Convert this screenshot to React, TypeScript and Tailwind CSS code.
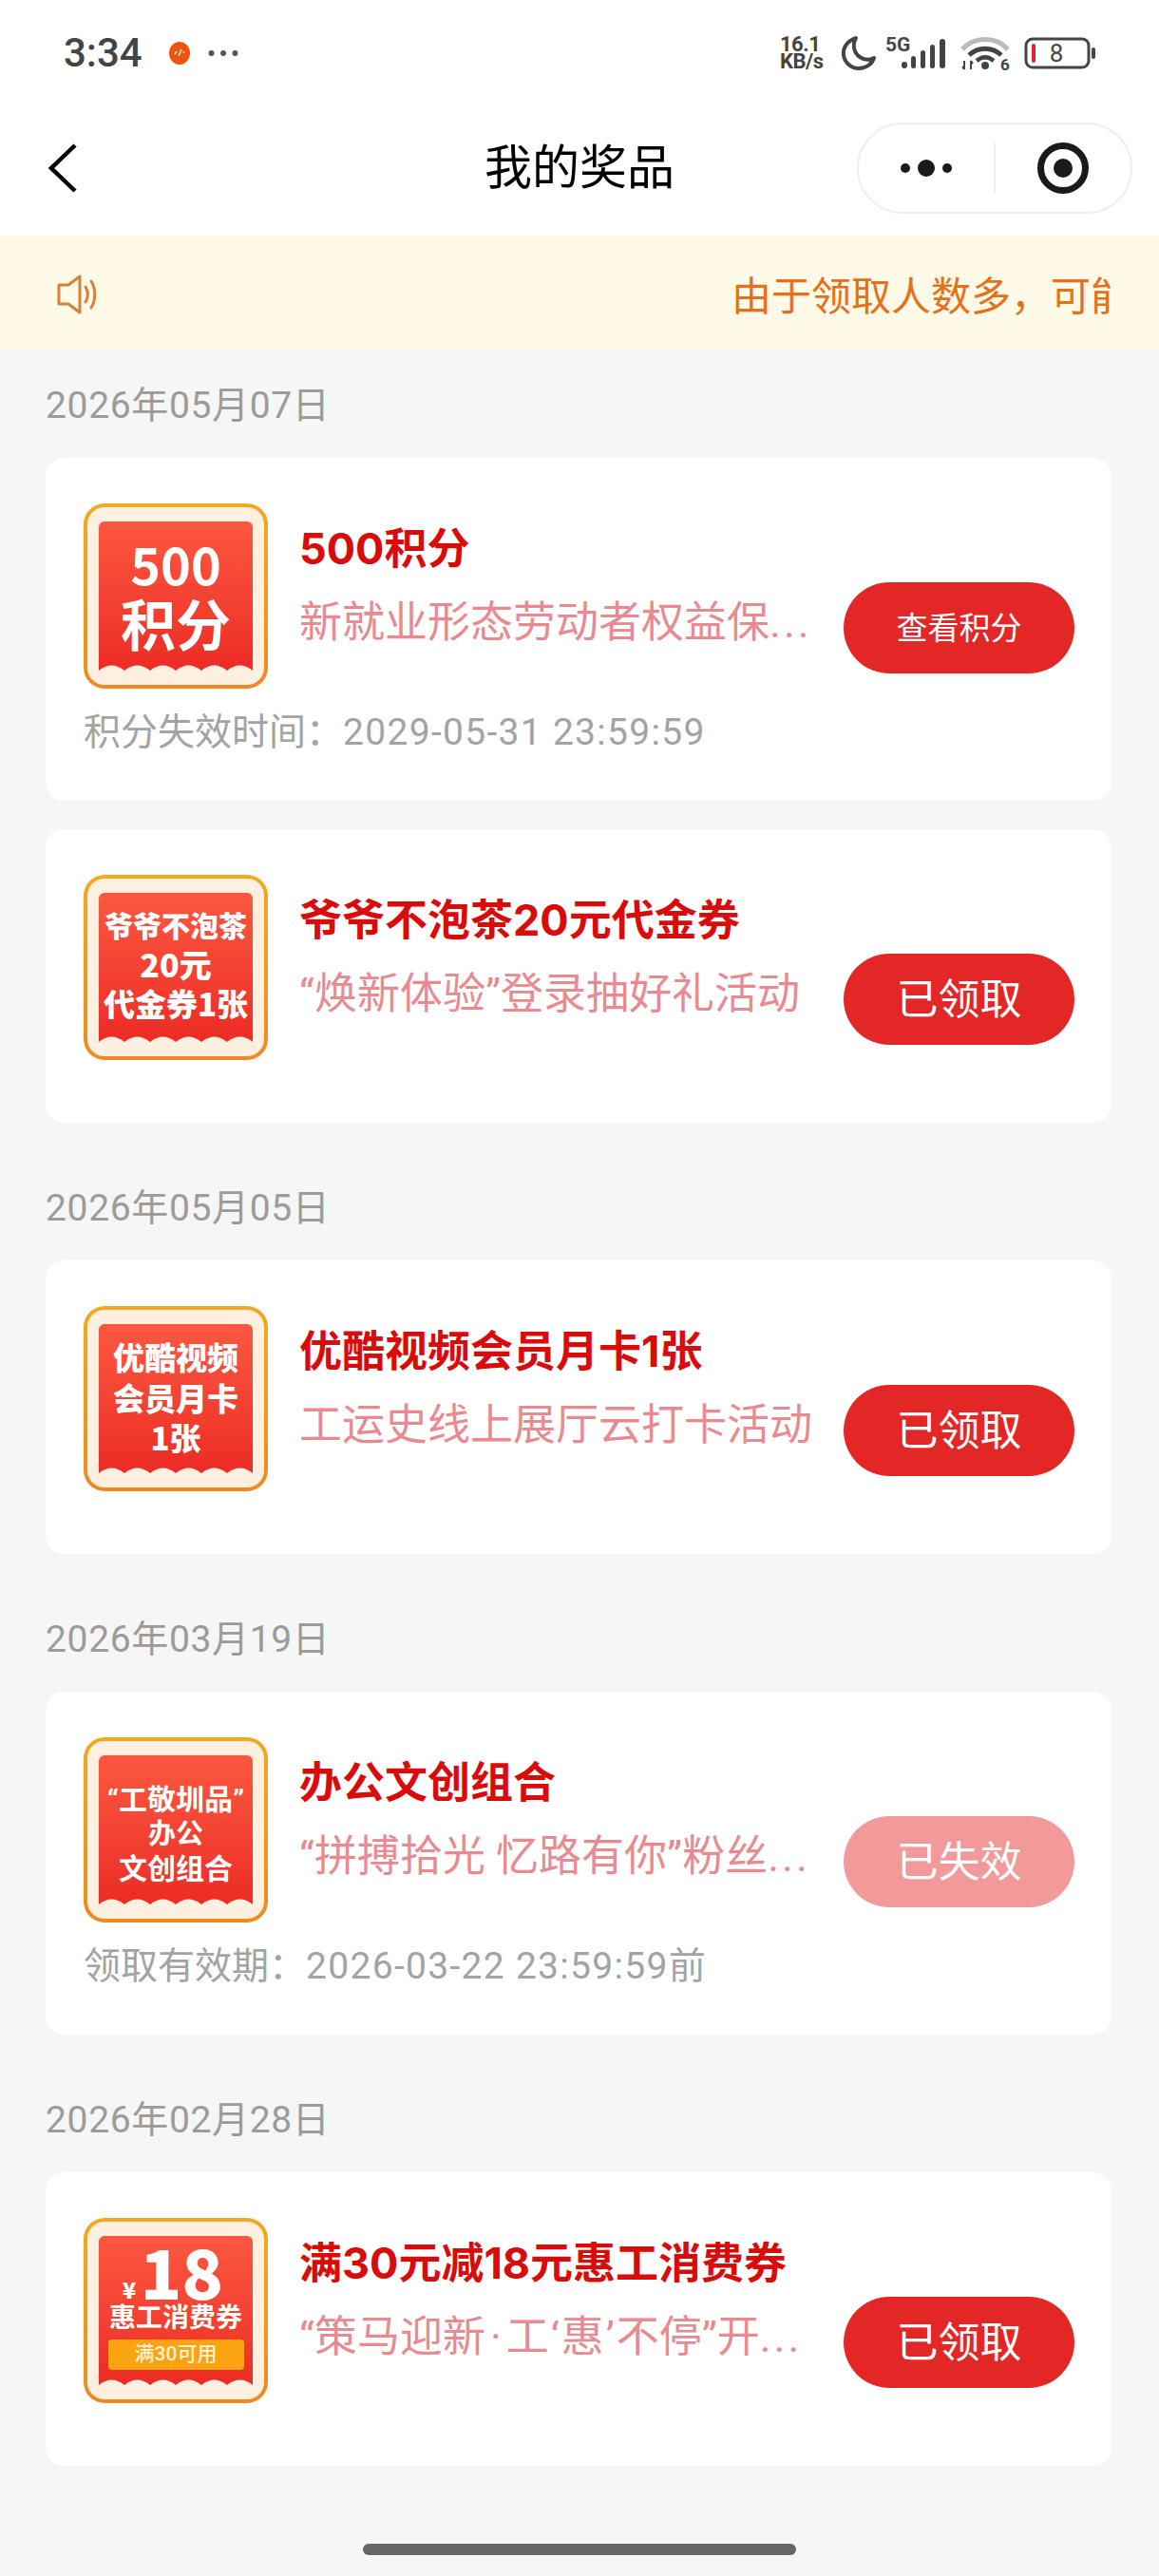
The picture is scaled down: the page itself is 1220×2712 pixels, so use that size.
import type { ReactNode } from "react";

type Line = { text: string; size: number; lead: number; font?: string };

type Prize = {
  id: string;
  thumb: Line[] | "coupon";
  thumbPad?: string;
  title: string;
  sub: ReactNode;
  action: string;
  small?: boolean;
  faded?: boolean;
  note?: [string, string];
};

const notoBold = "font-bold font-['Noto_Sans_CJK_SC',sans-serif]";
const notoBlack = "font-black font-['Noto_Sans_CJK_SC',sans-serif]";
const dots = <span className="tracking-[3px]">...</span>;

const groups: { date: string; prizes: Prize[] }[] = [
  {
    date: "2026年05月07日",
    prizes: [
      {
        id: "points",
        thumb: [
          { text: "500", size: 54, lead: 60, font: notoBold },
          { text: "积分", size: 58, lead: 64, font: notoBold },
        ],
        title: "500积分",
        sub: <>新就业形态劳动者权益保{dots}</>,
        action: "查看积分",
        small: true,
        note: ["积分失效时间：", "2029-05-31 23:59:59"],
      },
      {
        id: "tea",
        thumb: [
          { text: "爷爷不泡茶", size: 30, lead: 42 },
          { text: "20元", size: 34, lead: 42 },
          { text: "代金券1张", size: 33, lead: 40 },
        ],
        thumbPad: "pb-[10px]",
        title: "爷爷不泡茶20元代金券",
        sub: "“焕新体验”登录抽好礼活动",
        action: "已领取",
      },
    ],
  },
  {
    date: "2026年05月05日",
    prizes: [
      {
        id: "youku",
        thumb: [
          { text: "优酷视频", size: 33, lead: 43 },
          { text: "会员月卡", size: 33, lead: 43 },
          { text: "1张", size: 33, lead: 40 },
        ],
        title: "优酷视频会员月卡1张",
        sub: "工运史线上展厅云打卡活动",
        action: "已领取",
      },
    ],
  },
  {
    date: "2026年03月19日",
    prizes: [
      {
        id: "office",
        thumb: [
          { text: "“工敬圳品”", size: 30, lead: 36, font: "font-bold" },
          { text: "办公", size: 29, lead: 36, font: "font-bold" },
          { text: "文创组合", size: 30, lead: 38, font: "font-bold" },
        ],
        thumbPad: "pt-[10px]",
        title: "办公文创组合",
        sub: <>“拼搏拾光 忆路有你”粉丝{dots}</>,
        action: "已失效",
        faded: true,
        note: ["领取有效期：", "2026-03-22 23:59:59前"],
      },
    ],
  },
  {
    date: "2026年02月28日",
    prizes: [
      {
        id: "coupon",
        thumb: "coupon",
        title: "满30元减18元惠工消费券",
        sub: (
          <>
            “策马迎新<span className="mx-[5px]">·</span>工<span className="mx-[2px]">‘</span>惠<span className="mx-[2px]">’</span>不停”开{dots}
          </>
        ),
        action: "已领取",
      },
    ],
  },
];

function StatusBar() {
  return (
    <div className="flex h-[112px] items-center bg-white pl-[67px] pr-[66px] text-[#444]">
      <span className="w-[84px] text-[42px] leading-none font-medium">3:34</span>
      <svg className="ml-[27px]" width="22" height="24" viewBox="0 0 22 24">
        <ellipse cx="11" cy="12" rx="11" ry="12" fill="#ee5310" />
        <path d="M6 13l2-3M10 15l3-7M15 12l1-2" stroke="#ffe6d0" strokeWidth="1.6" />
      </svg>
      <svg className="ml-[19px]" width="32" height="8" viewBox="0 0 32 8" fill="#555">
        <circle cx="3.5" cy="4" r="3" />
        <circle cx="16" cy="4" r="3" />
        <circle cx="28.5" cy="4" r="3" />
      </svg>
      <div className="ml-auto flex items-center">
        <div className="flex w-[52px] flex-col text-[22px] leading-[18px] font-bold tracking-[-0.5px]">
          <span>16.1</span>
          <span className="whitespace-nowrap">KB/s</span>
        </div>
        <svg className="ml-[12px]" width="38" height="38" viewBox="0 0 38 38" fill="none">
          <path d="M16 3C7 6 2 13 3 21c1 8 8 14 16 14 8 0 14-5 16-11-3 2-7 2-11 1C15 22 11 12 16 3z" stroke="#444" strokeWidth="4" strokeLinejoin="round" />
        </svg>
        <svg className="ml-[9px]" width="66" height="36" viewBox="0 0 66 36">
          <text x="0" y="16" fontSize="21" fontWeight="700" fill="#444">5G</text>
          <rect x="17" y="27" width="6" height="7" rx="3" fill="#444" />
          <rect x="27" y="21" width="5" height="13" rx="2.5" fill="#444" />
          <rect x="37" y="15" width="5" height="19" rx="2.5" fill="#444" />
          <rect x="47" y="9" width="5" height="25" rx="2.5" fill="#444" />
          <rect x="57" y="3" width="6" height="31" rx="3" fill="#444" />
        </svg>
        <svg className="ml-[13px]" width="52" height="38" viewBox="0 0 52 38" fill="none">
          <path d="M2 15C14 1 38 1 50 15" stroke="#bbb" strokeWidth="5" />
          <path d="M9 21c10-9 24-9 34 0" stroke="#444" strokeWidth="5" />
          <path d="M17 27c6-5 12-5 18 0" stroke="#444" strokeWidth="4.5" />
          <circle cx="26" cy="32" r="4" fill="#444" />
          <path d="M4 27v9M2 33l2 3M11 36v-9M13 30l-2-3" stroke="#444" strokeWidth="2" />
          <text x="42" y="37" fontSize="17" fontWeight="700" fill="#444">6</text>
        </svg>
        <svg className="ml-[15px]" width="76" height="34" viewBox="0 0 76 34" fill="none">
          <rect x="2" y="2" width="66" height="30" rx="7" stroke="#444" strokeWidth="3" />
          <rect x="8" y="7" width="4" height="20" rx="2" fill="#e0222a" />
          <text x="34" y="26" fontSize="26" textAnchor="middle" fill="#444">8</text>
          <rect x="71" y="11" width="4" height="12" rx="2" fill="#444" />
        </svg>
      </div>
    </div>
  );
}

function NavBar() {
  return (
    <div className="grid h-[136px] grid-cols-[1fr_auto_1fr] items-center bg-white pb-[7px]">
      <svg className="ml-[50px]" width="32" height="54" viewBox="0 0 32 54" fill="none">
        <path d="M29 3L4 27l25 24" stroke="#000" strokeWidth="4.5" />
      </svg>
      <h1 className="text-[50px] leading-[60px] text-black">我的奖品</h1>
      <div className="mr-[28px] flex h-[96px] w-[290px] items-center justify-self-end rounded-full border-2 border-[#eeeeee]">
        <div className="flex flex-1 items-center justify-center gap-[8px]">
          <span className="h-[10px] w-[10px] rounded-full bg-[#1a1a1a]" />
          <span className="h-[18px] w-[18px] rounded-full bg-[#1a1a1a]" />
          <span className="h-[10px] w-[10px] rounded-full bg-[#1a1a1a]" />
        </div>
        <div className="h-[54px] w-[2px] bg-[#f0f0f0]" />
        <div className="flex flex-1 items-center justify-center">
          <div className="flex h-[54px] w-[54px] items-center justify-center rounded-full border-[7px] border-[#1a1a1a]">
            <span className="h-[20px] w-[20px] rounded-full bg-[#1a1a1a]" />
          </div>
        </div>
      </div>
    </div>
  );
}

function Notice() {
  return (
    <div className="flex h-[120px] items-center bg-[#fff9e8] pl-[60px] pr-[50px]">
      <svg className="mt-[4px]" width="44" height="42" viewBox="0 0 44 42" fill="none" stroke="#d9803a" strokeWidth="3" strokeLinejoin="round" strokeLinecap="round">
        <path d="M2 11h10L24 2v38L12 31H2z" />
        <path d="M30 13c3 5 3 11 0 16" />
        <path d="M36 7c5 8 5 20 0 28" />
      </svg>
      <div className="mt-[10px] ml-auto w-[400px] overflow-hidden text-[42px] leading-[56px] whitespace-nowrap text-[#e5701a]">
        由于领取人数多，可能
      </div>
    </div>
  );
}

function Thumb({ prize }: { prize: Prize }) {
  const { thumb, thumbPad } = prize;
  return (
    <div className="h-[195px] w-[194px] shrink-0 rounded-[22px] bg-gradient-to-b from-[#f2a91e] to-[#ee8a22] p-[4px]">
      <div className="flex h-full w-full items-center justify-center rounded-[18px] bg-[#fdf0e0]">
        <div
          className={`relative flex h-[158px] w-[162px] flex-col items-center justify-center overflow-hidden rounded-t-[6px] bg-gradient-to-b from-[#fb5740] to-[#ec2a24] text-white ${
            thumbPad ?? "pb-[6px]"
          }`}
        >
          {thumb === "coupon" ? (
            <>
              <div className="flex h-[62px] items-end pr-[6px] font-black font-['Noto_Sans_CJK_SC',sans-serif]">
                <span className="mr-[4px] mb-[4px] text-[24px] leading-none">¥</span>
                <span className="mb-[5px] text-[72px] leading-[62px]">18</span>
              </div>
              <div className="mt-[-2px] text-[28px] leading-[34px] font-bold">惠工消费券</div>
              <div className="mt-[5px] flex h-[32px] w-[143px] items-center justify-center rounded-[4px] bg-[#fca311] text-[21px] font-medium text-[#fff3d8]">
                满30可用
              </div>
            </>
          ) : (
            thumb.map((l) => (
              <div
                key={l.text}
                className={`whitespace-nowrap ${l.font ?? notoBlack}`}
                style={{ fontSize: l.size, lineHeight: `${l.lead}px` }}
              >
                {l.text}
              </div>
            ))
          )}
          <svg className="absolute bottom-0 left-0" width="162" height="7" viewBox="0 0 162 7" fill="#fdf0e0">
            <path d="M0 7V6Q13.5-5 27 6 40.5-5 54 6 67.5-5 81 6 94.5-5 108 6 121.5-5 135 6 148.5-5 162 6V7z" />
          </svg>
        </div>
      </div>
    </div>
  );
}

function PrizeCard({ prize }: { prize: Prize }) {
  return (
    <div className={`rounded-[20px] bg-white pt-[48px] pr-[39px] pl-[40px] ${prize.note ? "pb-[48px]" : "pb-[66px]"}`}>
      <div className="flex">
        <Thumb prize={prize} />
        <div className="ml-[33px] w-[560px] shrink-0 pt-[23px]">
          <div className="font-['Inter','Noto_Sans_CJK_SC',sans-serif] text-[45px] leading-[50px] font-bold whitespace-nowrap text-[#d90b0b]">
            {prize.title}
          </div>
          <div className="mt-[28px] text-[45px] leading-[50px] whitespace-nowrap text-[#e88a90]">{prize.sub}</div>
        </div>
        <div
          className={`mt-[83px] ml-auto flex h-[96px] w-[243px] shrink-0 items-center justify-center self-start rounded-full pt-[2px] text-white ${
            prize.faded ? "bg-[#f29a9a]" : "bg-[#e32626]"
          } ${prize.small ? "text-[33px]" : "text-[44px]"}`}
        >
          {prize.action}
        </div>
      </div>
      {prize.note && (
        <div className="mt-[22px] h-[48px] text-[39px] leading-[48px] whitespace-nowrap text-[#a3a3a3]">
          {prize.note[0]}
          <span className="tracking-[1.3px]">{prize.note[1]}</span>
        </div>
      )}
    </div>
  );
}

export default function App() {
  return (
    <div className="h-[2712px] w-[1220px] overflow-hidden bg-[#f6f6f6] font-['Roboto','Noto_Sans_CJK_SC',sans-serif]">
      <StatusBar />
      <NavBar />
      <Notice />
      <main className="pt-[6px] pr-[50px] pl-[48px]">
        {groups.map((g) => (
          <section key={g.date} className="mb-[37px]">
            <div className="flex h-[108px] items-center pb-[2px] text-[39px] tracking-[0.65px] text-[#9b9b9b]">{g.date}</div>
            <div className="flex flex-col gap-[30px]">
              {g.prizes.map((p) => (
                <PrizeCard key={p.id} prize={p} />
              ))}
            </div>
          </section>
        ))}
      </main>
      <div className="mx-auto mt-[82px] h-[12px] w-[456px] rounded-full bg-[#666]" />
    </div>
  );
}
